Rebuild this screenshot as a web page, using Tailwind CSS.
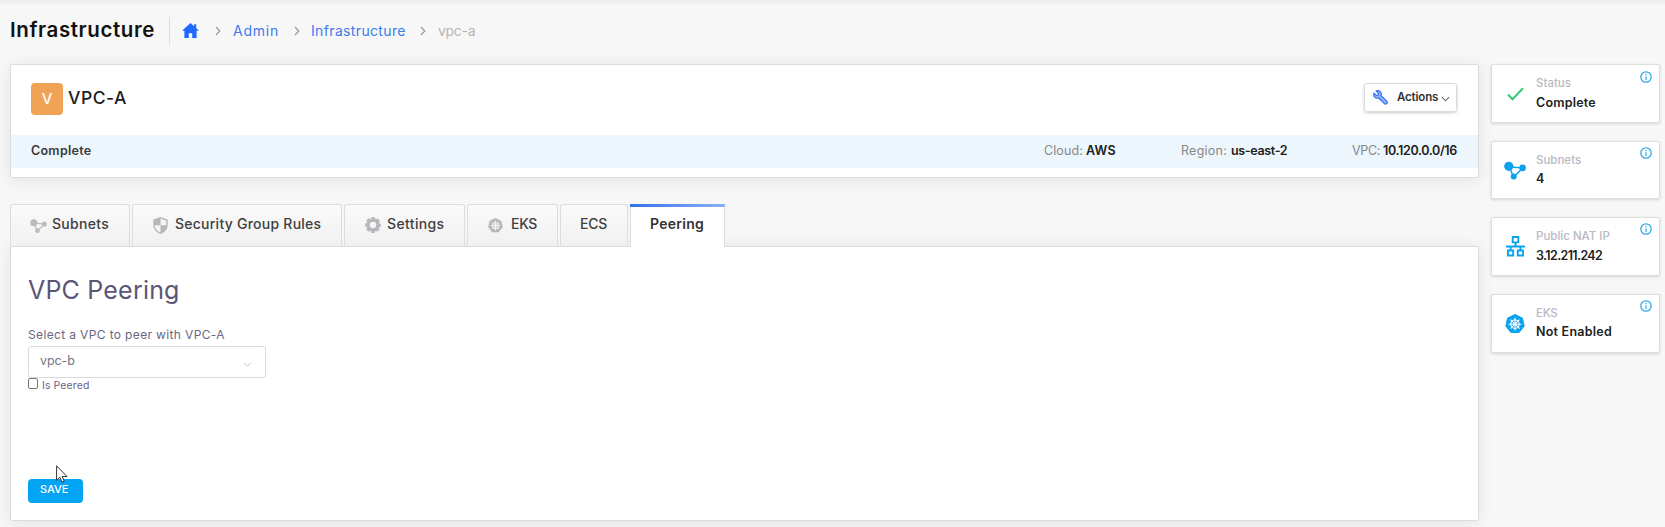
<!DOCTYPE html>
<html lang="en">
<head>
<meta charset="utf-8">
<title>Infrastructure</title>
<script src="https://cdn.jsdelivr.net/npm/@tailwindcss/browser@4"></script>
</head>
<body class="h-[527px] overflow-hidden bg-[#f7f7f7] font-['Inter',sans-serif] text-[#212121]">
<svg class="hidden">
  <defs>
    <symbol id="nodes" viewBox="0 0 22 18"><path d="M5 5.2 18.7 6.5 9.7 15.5Z" fill="none" stroke="currentColor" stroke-width="1.5"/><circle cx="4.8" cy="4.8" r="4.6" fill="currentColor"/><circle cx="18.6" cy="6.4" r="3.3" fill="currentColor"/><circle cx="9.7" cy="15" r="3" fill="currentColor"/></symbol>
    <symbol id="info" viewBox="0 0 12 12"><circle cx="6" cy="6" r="5.2" fill="none" stroke="currentColor" stroke-width="1.3"/><path d="M6 5.2V9M6 3v1.2" stroke="currentColor" stroke-width="1.2"/></symbol>
    <symbol id="right" viewBox="0 0 6 10"><path d="m1 1 3.8 4L1 9" fill="none" stroke="currentColor" stroke-width="1.2"/></symbol>
    <symbol id="down" viewBox="0 0 10 6"><path d="m1 1 4 4 4-4" fill="none" stroke="currentColor" stroke-width="1.2"/></symbol>
    <symbol id="helm" viewBox="0 0 20 20"><path d="m10 .5 7.4 3.6 1.8 8-5.1 6.4H5.9L.8 12.1l1.800-8Z" fill="currentColor" stroke="currentColor" stroke-linejoin="round"/><g fill="none" stroke="#fff" stroke-width="1.1"><circle cx="10" cy="10.2" r="4.2"/><path d="M10 3.8v12.8M3.6 10.2h12.8M5.5 5.7l9 9M14.5 5.7l-9 9"/></g></symbol>
  </defs>
</svg>
<div class="h-[6px] bg-linear-to-b from-[#ececec] to-[#f7f7f7]"></div>
<header class="flex h-[48px] items-center pl-[10px] whitespace-nowrap">
  <h1 class="w-[159px] text-[20.5px] font-semibold tracking-[0.6px] text-[#111]">Infrastructure</h1>
  <div class="mt-[2px] h-[28px] w-px bg-[#dcdcdc]"></div>
  <svg class="mt-px ml-[12px] h-[15px] w-[17px] text-[#1f69ff]" viewBox="0 0 17 15"><path d="M8.5 0 0 7.7h2.4V15h4.4v-4.8h3.4V15h4.4V7.7H17l-2.8-2.5V1.2h-2.1v2.1Z" fill="currentColor"/></svg>
  <svg class="mt-[2px] ml-[16px] h-[10px] w-[6px] text-[#999]"><use href="#right"/></svg>
  <a class="ml-[12px] w-[46px] text-[14px] tracking-[0.77px] text-[#3d7af0]">Admin</a>
  <svg class="mt-[2px] ml-[15px] h-[10px] w-[6px] text-[#999]"><use href="#right"/></svg>
  <a class="ml-[11px] w-[95px] text-[14px] tracking-[0.35px] text-[#3d7af0]">Infrastructure</a>
  <svg class="mt-[2px] ml-[14px] h-[10px] w-[6px] text-[#999]"><use href="#right"/></svg>
  <span class="ml-[12px] text-[14px] tracking-[-0.3px] text-[#b5b5b5]">vpc-a</span>
</header>
<div class="flex items-start pt-[10px] pl-[10px]">
  <main class="w-[1469px]">
    <section class="h-[114px] rounded-[2px] border border-[#dcdcdc] bg-white shadow-[0_2px_16px_rgba(0,0,0,0.09)]">
      <div class="flex h-[70px] items-start pt-[18px] pr-[21px] pl-[20px]">
        <div class="flex h-[32px] w-[32px] items-center justify-center rounded-[4px] bg-[#f0a354] text-[15px] font-medium text-white">V</div>
        <h2 class="ml-[5px] flex h-[30px] items-center text-[17.5px] font-medium tracking-[0.5px] text-[#1c1c1c]">VPC-A</h2>
        <button class="ml-auto flex h-[29px] w-[93px] items-center rounded-[3px] border border-[#dcdcdc] pl-[8px] text-[11.5px] font-semibold text-[#333] shadow-[0_1px_3px_rgba(0,0,0,0.2)]">
          <svg class="h-[15px] w-[15px]" viewBox="0 0 15 15"><path d="M3.1.9a3.7 3.7 0 0 1 5 4.700l5.600 5.600a1.600 1.600 0 0 1-2.400 2.400L5.700 8A3.700 3.700 0 0 1 1 3.100l2.400 2.300 1.800-.3.2-1.800Z" fill="#8fb3fb" stroke="#2e6cf3" stroke-width="1.1"/></svg>
          <span class="ml-[9px] w-[41px] tracking-[-0.15px] whitespace-nowrap">Actions</span>
          <svg class="mt-[2px] ml-[3px] h-[6px] w-[9px] text-[#666]" viewBox="0 0 10 6"><use href="#down"/></svg>
        </button>
      </div>
      <div class="flex h-[33px] items-center bg-[#edf5fd] pr-[21px] pb-px pl-[20px] text-[12.5px] whitespace-nowrap">
        <span class="mr-auto font-semibold tracking-[0.27px] text-[#3a3a3a]">Complete</span>
        <span class="w-[42px] tracking-[0.1px] text-[#888]">Cloud:</span><span class="w-[95px] font-semibold tracking-[0.3px]">AWS</span>
        <span class="w-[50px] tracking-[0.25px] text-[#888]">Region:</span><span class="w-[121px] font-semibold tracking-[-0.35px]">us-east-2</span>
        <span class="w-[31px] tracking-[-0.3px] text-[#888]">VPC:</span><span class="w-[74px] font-semibold tracking-[-0.35px]">10.120.0.0/16</span>
      </div>
    </section>
    <nav class="mt-[26px] flex h-[42px] gap-[2px] text-[14px] font-medium text-[#404040] whitespace-nowrap">
      <a class="flex w-[120px] items-center rounded-t-[3px] border border-b-0 border-[#dcdcdc] bg-linear-to-b from-[#fafafa] to-[#f1f1f1] pb-[4px] pl-[19px] tracking-[0.3px]"><svg class="mt-[4px] h-[14px] w-[17px] text-[#babbbf]"><use href="#nodes"/></svg><span class="ml-[5px]">Subnets</span></a>
      <a class="flex w-[210px] items-center rounded-t-[3px] border border-b-0 border-[#dcdcdc] bg-linear-to-b from-[#fafafa] to-[#f1f1f1] pb-[4px] pl-[20px] tracking-[0.25px]"><svg class="mt-[3px] h-[17px] w-[15px] text-[#b5b7bb]" viewBox="0 0 15 17"><path d="M7.500.8 14 3v5.300c0 3.700-2.700 6.400-6.500 8C3.700 14.700 1 12 1 8.300V3Z" fill="#f3f3f3" stroke="currentColor" stroke-width="1.4"/><path d="M7.500.8V8.300H1V3ZM7.500 8.300H14c0 3.700-2.700 6.400-6.500 8Z" fill="currentColor"/></svg><span class="ml-[7px]">Security Group Rules</span></a>
      <a class="flex w-[121px] items-center rounded-t-[3px] border border-b-0 border-[#dcdcdc] bg-linear-to-b from-[#fafafa] to-[#f1f1f1] pb-[4px] pl-[20px] tracking-[0.37px]"><svg class="mt-[3px] h-[16px] w-[16px] text-[#b5b7bb]" viewBox="0 0 16 16"><circle cx="8" cy="8" r="5" fill="none" stroke="currentColor" stroke-width="3.6"/><circle cx="8" cy="8" r="7.1" fill="none" stroke="currentColor" stroke-width="1.6" stroke-dasharray="3.58 2" stroke-dashoffset="1.8"/></svg><span class="ml-[6px]">Settings</span></a>
      <a class="flex w-[91px] items-center rounded-t-[3px] border border-b-0 border-[#dcdcdc] bg-linear-to-b from-[#fafafa] to-[#f1f1f1] pb-[4px] pl-[20px] tracking-[-0.3px]"><svg class="mt-[3px] h-[15px] w-[15px] text-[#b5b7bb]" viewBox="0 0 20 20"><use href="#helm"/></svg><span class="ml-[8px]">EKS</span></a>
      <a class="flex w-[68px] items-center rounded-t-[3px] border border-b-0 border-[#dcdcdc] bg-linear-to-b from-[#fafafa] to-[#f1f1f1] pb-[4px] pl-[19px] tracking-[-0.26px]">ECS</a>
      <a class="relative z-10 flex h-[43px] w-[95px] flex-col border-x border-[#dcdcdc] bg-white font-semibold tracking-[0.28px] text-[#333]"><span class="-mx-px h-[3px] bg-linear-to-r from-[#3070ea] to-[#8db0f5]"></span><span class="flex h-[33px] items-center pl-[19px]">Peering</span></a>
    </nav>
    <section class="h-[275px] rounded-b-[2px] border border-[#dcdcdc] bg-white pl-[17px] text-[#6a6680] shadow-[0_2px_16px_rgba(0,0,0,0.09)]">
      <h3 class="mt-[27px] h-[32px] text-[25px] leading-[32px] tracking-[0.2px] text-[#5b5675]">VPC Peering</h3>
      <div class="mt-[20px] h-[20px] text-[12px] leading-[18px] tracking-[0.36px]">Select a VPC to peer with VPC-A</div>
      <div class="flex h-[32px] w-[238px] items-center justify-between rounded-[3px] border border-[#d9d9d9] pr-[13px] pl-[11px] text-[12.5px] text-[#77757f]"><span class="pb-[2px] tracking-[-0.1px]">vpc-b</span><svg class="mt-[4px] h-[5px] w-[9px] text-[#c4c4c4]" viewBox="0 0 10 6"><use href="#down"/></svg></div>
      <div class="flex h-[15px] items-start text-[10.5px] leading-[15px]"><span class="h-[11px] w-[10px] rounded-[2px] border border-[#767676]"></span><span class="ml-[4px] tracking-[0.1px]">Is Peered</span></div>
      <div class="relative mt-[86px] w-[56px]">
        <button class="flex h-[24px] w-[55px] items-start rounded-[4px] bg-[#04a4f4] pt-[2px] pl-[12px] text-[11px] font-medium text-white">SAVE</button>
        <svg class="absolute -top-[14px] left-[28px] h-[18px] w-[12px]" viewBox="0 0 12 18"><path d="M.6.8v14.400l3.200-3 2.200 5 2.300-1-2.100-4.700h4.800Z" fill="#fff" stroke="#333" stroke-width="1"/></svg>
      </div>
    </section>
  </main>
  <aside class="ml-[12px] flex w-[169px] flex-col gap-[18px] text-[12.5px] font-semibold whitespace-nowrap">
    <div class="flex h-[59px] rounded-[2px] border border-[#dedede] bg-white shadow-[0_1px_3px_rgba(0,0,0,0.14)]"><div class="flex w-[44px] items-center justify-center pl-[2px]"><svg class="h-[14px] w-[17px]" viewBox="0 0 17 14"><path d="m1 7.500 4.500 4.700L16 1.200" fill="none" stroke="#35c878" stroke-width="2"/></svg></div><div class="w-[96px] pt-[10px] leading-[16px]"><div class="text-[11.5px] font-medium text-[#b9b8c4]">Status</div><div class="mt-[4px] tracking-[0.22px]">Complete</div></div><svg class="mt-[6px] ml-[8px] h-[12px] w-[12px] text-[#2fabe9]"><use href="#info"/></svg></div>
    <div class="flex h-[58px] rounded-[2px] border border-[#dedede] bg-white shadow-[0_1px_3px_rgba(0,0,0,0.14)]"><div class="flex w-[44px] items-center justify-center pl-[2px]"><svg class="h-[19px] w-[22px] text-[#0aa2ef]"><use href="#nodes"/></svg></div><div class="w-[96px] pt-[10px] leading-[16px]"><div class="text-[11.5px] font-medium text-[#b9b8c4]">Subnets</div><div class="mt-[3px]">4</div></div><svg class="mt-[5px] ml-[8px] h-[12px] w-[12px] text-[#2fabe9]"><use href="#info"/></svg></div>
    <div class="flex h-[59px] rounded-[2px] border border-[#dedede] bg-white shadow-[0_1px_3px_rgba(0,0,0,0.14)]"><div class="flex w-[44px] items-center justify-center pl-[2px]"><svg class="h-[21px] w-[19px]" viewBox="0 0 19 21"><path d="M6.700 1h5.600v5.400H6.700ZM2 14.500h5.200v5H2ZM11.800 14.500H17v5h-5.200ZM9.500 6.500v4M0 10.500h19M4.600 10.500v4M14.400 10.500v4" fill="none" stroke="#0aa2ef" stroke-width="1.9"/></svg></div><div class="w-[96px] pt-[10px] leading-[16px]"><div class="text-[11.5px] font-medium text-[#b9b8c4]">Public NAT IP</div><div class="mt-[4px] tracking-[-0.62px]">3.12.211.242</div></div><svg class="mt-[5px] ml-[8px] h-[12px] w-[12px] text-[#2fabe9]"><use href="#info"/></svg></div>
    <div class="flex h-[59px] rounded-[2px] border border-[#dedede] bg-white shadow-[0_1px_3px_rgba(0,0,0,0.14)]"><div class="flex w-[44px] items-center justify-center pl-[2px]"><svg class="h-[20px] w-[20px] text-[#0aa2ef]" viewBox="0 0 20 20"><use href="#helm"/></svg></div><div class="w-[96px] pt-[10px] leading-[16px]"><div class="text-[11.5px] font-medium tracking-[-0.3px] text-[#b9b8c4]">EKS</div><div class="mt-[3px] tracking-[0.24px]">Not Enabled</div></div><svg class="mt-[5px] ml-[8px] h-[12px] w-[12px] text-[#2fabe9]"><use href="#info"/></svg></div>
  </aside>
</div>
</body>
</html>
